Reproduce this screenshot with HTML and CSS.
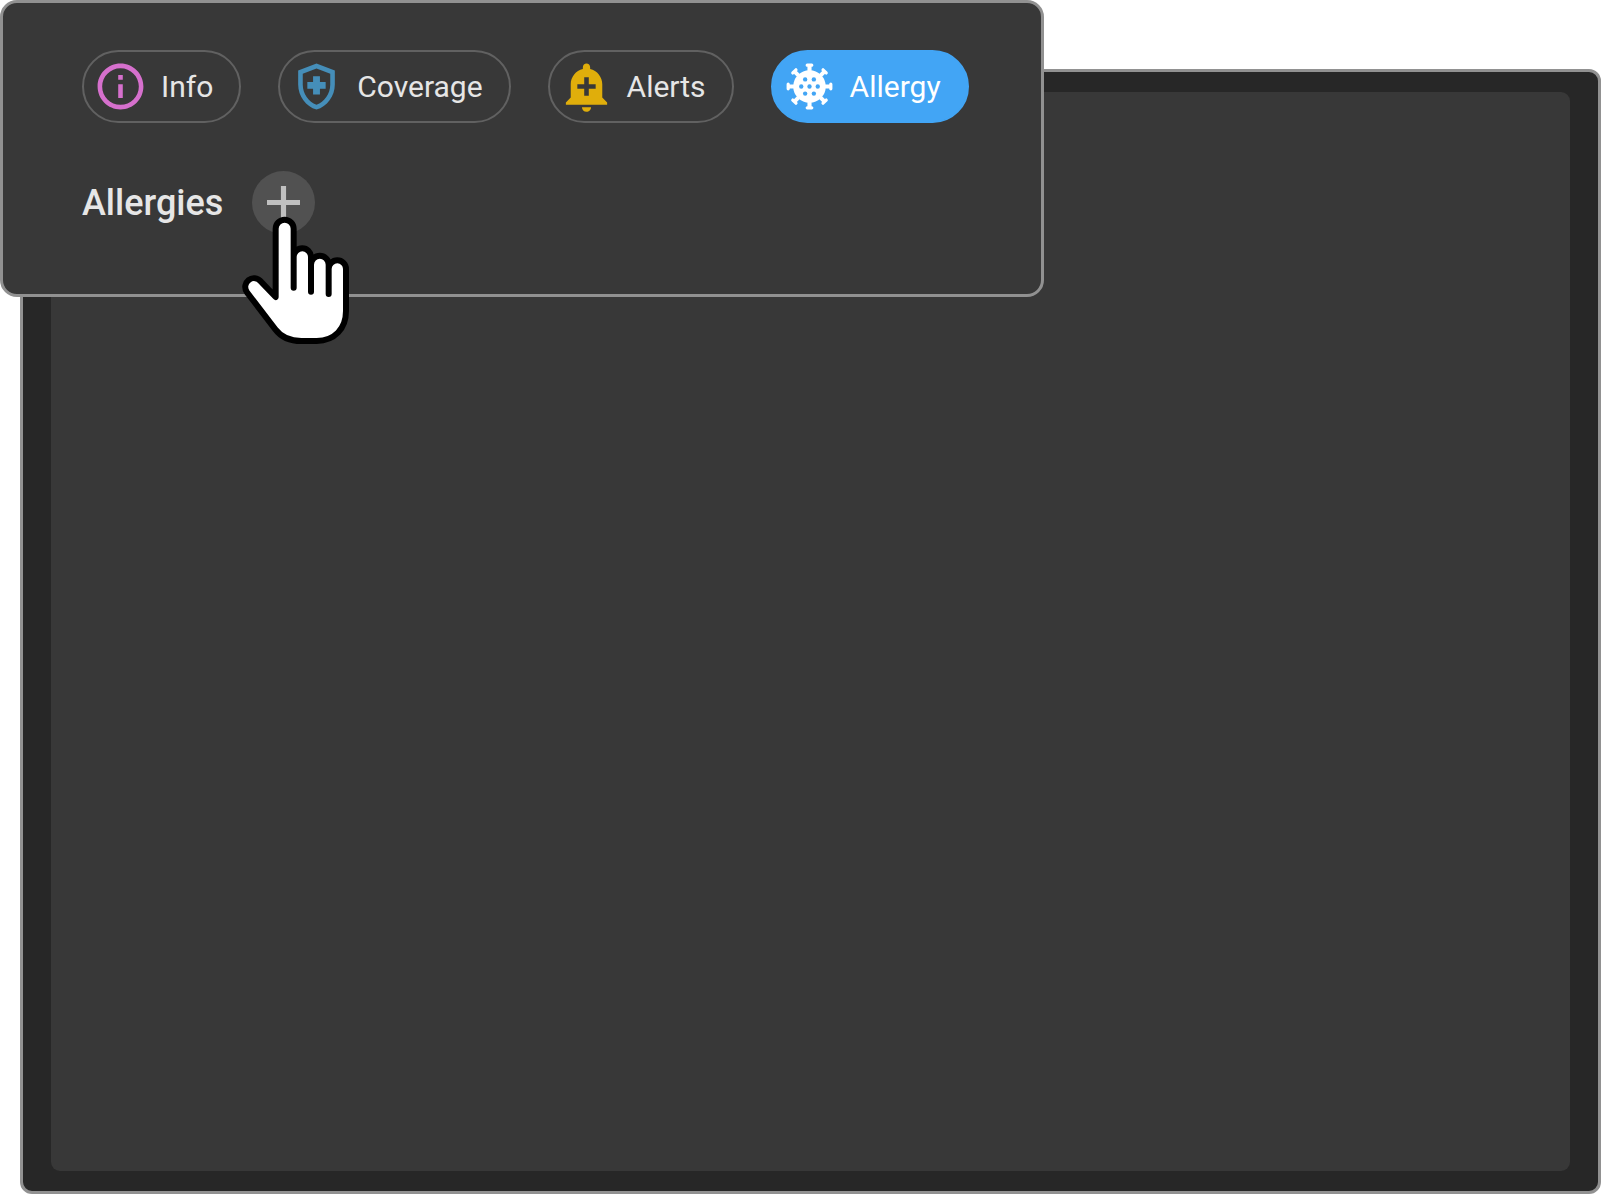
FILE: index.html
```html
<!DOCTYPE html>
<html lang="en">
  <head>
    <meta charset="UTF-8" />
    <meta name="viewport" content="width=device-width, initial-scale=1.0" />
    <title>Allergies</title>
    <link rel="stylesheet" href="styles.css">
  </head>
  <body>
    <main class="window">
      <div class="content"></div>
    </main>

    <section class="popup">
      <nav class="chips">
        <button type="button" class="chip info">
          <svg class="icon" viewBox="0 0 24 24">
            <path d="M11 7h2v2h-2zm0 4h2v6h-2zm1-9C6.48 2 2 6.48 2 12s4.48 10 10 10 10-4.48 10-10S17.52 2 12 2zm0 18c-4.41 0-8-3.59-8-8s3.59-8 8-8 8 3.59 8 8-3.59 8-8 8z" />
          </svg>
          <span>Info</span>
        </button>
        <button type="button" class="chip coverage">
          <svg class="icon" viewBox="0 0 24 24">
            <path d="M10.5 15.5V13H8v-3h2.5V7.5h3V10H16v3h-2.5v2.5zM12 2L4 5v6.09c0 5.05 3.41 9.76 8 10.91 4.59-1.15 8-5.86 8-10.91V5l-8-3zm6 9.09c0 4-2.55 7.7-6 8.83-3.45-1.13-6-4.82-6-8.83v-4.7l6-2.25 6 2.25v4.7z" />
          </svg>
          <span>Coverage</span>
        </button>
        <button type="button" class="chip alerts">
          <svg class="icon" viewBox="0 0 24 24">
            <path d="M10.01 21.01c0 1.1.89 1.99 1.99 1.99s1.99-.89 1.99-1.99h-3.98zm8.87-4.19V11c0-3.25-2.25-5.97-5.29-6.69v-.72C13.59 2.71 12.88 2 12 2s-1.59.71-1.59 1.59v.72C7.37 5.03 5.12 7.75 5.12 11v5.82L3 18.94V20h18v-1.06l-2.12-2.12zM16 13.01h-3v3h-2v-3H8V11h3V8h2v3h3v2.01z" />
          </svg>
          <span>Alerts</span>
        </button>
        <button type="button" class="chip active" aria-pressed="true">
          <svg class="icon" viewBox="0 0 24 24">
            <circle cx="12" cy="12" r="7.1" />
            <path class="spokes" d="M12 2.7V21.3M2.7 12H21.3M5.4 5.4L18.6 18.6M18.6 5.4L5.4 18.6" />
            <path class="tips" d="M11 2.7h2M11 21.3h2M2.7 11v2M21.3 11v2M4.7 6.1l1.4-1.4M17.9 4.7l1.4 1.4M4.7 17.9l1.4 1.4M17.9 19.3l1.4-1.4" />
            <g class="dots">
              <circle cx="10.1" cy="8.9" r="0.95" />
              <circle cx="13.9" cy="8.9" r="0.95" />
              <circle cx="8.4" cy="12" r="0.95" />
              <circle cx="12" cy="12" r="0.95" />
              <circle cx="15.6" cy="12" r="0.95" />
              <circle cx="10.1" cy="15.1" r="0.95" />
              <circle cx="13.9" cy="15.1" r="0.95" />
            </g>
          </svg>
          <span>Allergy</span>
        </button>
      </nav>

      <div class="heading">
        <h2>Allergies</h2>
        <button type="button" class="add" aria-label="Add allergy">
          <svg class="plus" viewBox="0 0 32 32">
            <path d="M16 0V32M0 16H32" />
          </svg>
          <svg class="cursor" viewBox="36 200 324 387">
            <path d="M137 443V238a27 27 0 0 1 54 0V415V323a26 26 0 0 1 52 0V427V346a26 26 0 0 1 53 0V434V359a26 26 0 0 1 52 0V485C348 538 314 574 260 575H214C180 575 154 564 136 540L51 429C32 402 68 368 95 399Z" />
          </svg>
        </button>
      </div>
    </section>
  </body>
</html>
```
FILE: styles.css
```css
* {
  box-sizing: border-box;
}

body {
  margin: 0;
  min-height: 100vh;
  padding: 69px 0 0 20px;
  display: flex;
  background: #fff;
  font-family: Roboto, "Liberation Sans", sans-serif;
}

.window {
  flex: 1;
  display: flex;
  padding: 20px 28px;
  background: #272727;
  border: 3px solid #919191;
  border-radius: 12px;
}

.content {
  flex: 1;
  background: #383838;
  border-radius: 9px;
}

/* floats over the top left corner of the window */
.popup {
  position: absolute;
  top: 0;
  left: 0;
  padding: 47px 72px 60px 79px;
  background: #383838;
  border: 3px solid #919191;
  border-radius: 17px;
}

.chips {
  display: flex;
  gap: 37px;
}

.chip {
  display: flex;
  align-items: center;
  gap: 13px;
  height: 73px;
  padding: 0 26px 0 9px;
  border: 2px solid #616161;
  border-radius: 37px;
  background: transparent;
  color: #e6e6e6;
  font-family: inherit;
  font-size: 30px;
  white-space: nowrap;
  cursor: pointer;
}

.icon {
  width: 55px;
  height: 55px;
  fill: currentColor;
}

.info .icon {
  color: #d670cd;
}

.coverage .icon {
  color: #458eb9;
}

.alerts .icon {
  color: #e0ae0b;
}

.chip.active {
  background: #42a5f5;
  border-color: #42a5f5;
  color: #fff;
}

.spokes,
.tips {
  fill: none;
  stroke: currentColor;
  stroke-width: 1.8;
}

.tips {
  stroke-width: 1.4;
  stroke-linecap: round;
}

.dots {
  fill: #42a5f5;
}

.heading {
  display: flex;
  align-items: center;
  gap: 29px;
  margin-top: 48px;
}

h2 {
  margin: 0;
  color: #e6e6e6;
  font-size: 36px;
  font-weight: 500;
}

.add {
  position: relative;
  display: flex;
  align-items: center;
  justify-content: center;
  width: 63px;
  height: 63px;
  padding: 0;
  border: none;
  border-radius: 50%;
  background: #515151;
  cursor: pointer;
}

.plus {
  width: 33px;
  height: 33px;
  fill: none;
  stroke: #c0c0c0;
  stroke-width: 5;
}

.cursor {
  position: absolute;
  top: 45px;
  left: -10px;
  width: 108px;
  height: 129px;
  fill: #fff;
  stroke: #000;
  stroke-width: 18;
  stroke-linejoin: round;
}
```
